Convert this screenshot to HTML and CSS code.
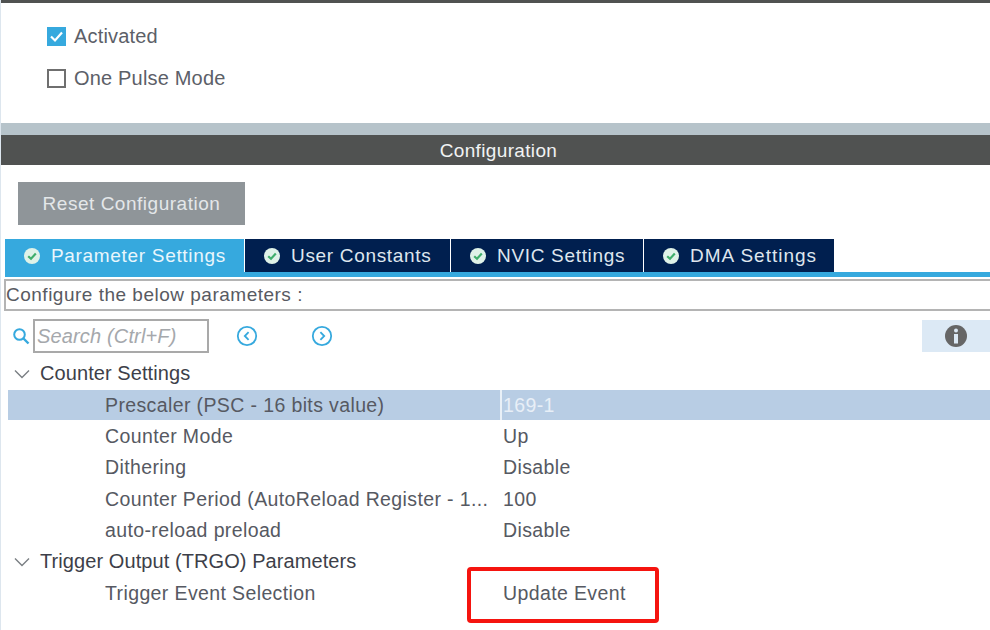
FILE: index.html
```html
<!DOCTYPE html>
<html lang="en">
<head>
<meta charset="utf-8">
<title>Timer configuration</title>
<link rel="stylesheet" href="styles.css">
</head>
<body>
<div class="page">
  <div class="top-bar"></div>
  <section class="mode">
    <label class="check-row">
      <span class="box checked"><svg viewBox="0 0 19 19" width="19" height="19"><path d="M4 9.5 8 13.5 15 5.5" fill="none" stroke="#fff" stroke-width="2.2"/></svg></span>
      <span>Activated</span>
    </label>
    <label class="check-row">
      <span class="box"></span>
      <span>One Pulse Mode</span>
    </label>
  </section>
  <div class="strip"></div>
  <header class="config-head">Configuration</header>
  <div class="reset-wrap"><button class="reset">Reset Configuration</button></div>
  <nav class="tabs">
    <div class="tab active"><svg class="ok" viewBox="0 0 18 18" width="18" height="18"><circle cx="9" cy="9" r="8" fill="#dff2e8"/><path d="M5.2 9.2 8 11.8 12.8 6.6" fill="none" stroke="#3fae6b" stroke-width="2.2"/></svg>Parameter Settings</div>
    <div class="tab w-user"><svg class="ok" viewBox="0 0 18 18" width="18" height="18"><circle cx="9" cy="9" r="8" fill="#dff2e8"/><path d="M5.2 9.2 8 11.8 12.8 6.6" fill="none" stroke="#3fae6b" stroke-width="2.2"/></svg>User Constants</div>
    <div class="tab w-nvic"><svg class="ok" viewBox="0 0 18 18" width="18" height="18"><circle cx="9" cy="9" r="8" fill="#dff2e8"/><path d="M5.2 9.2 8 11.8 12.8 6.6" fill="none" stroke="#3fae6b" stroke-width="2.2"/></svg>NVIC Settings</div>
    <div class="tab w-dma"><svg class="ok" viewBox="0 0 18 18" width="18" height="18"><circle cx="9" cy="9" r="8" fill="#dff2e8"/><path d="M5.2 9.2 8 11.8 12.8 6.6" fill="none" stroke="#3fae6b" stroke-width="2.2"/></svg>DMA Settings</div>
  </nav>
  <div class="describe">Configure the below parameters :</div>
  <div class="search-row">
    <svg class="mag" viewBox="0 0 18 18" width="18" height="18"><circle cx="7.5" cy="7.5" r="5.3" fill="none" stroke="#36a9de" stroke-width="2"/><path d="M11.5 11.5 16.5 16.5" stroke="#36a9de" stroke-width="2.4"/></svg>
    <div class="search">Search (Ctrl+F)</div>
    <svg class="nav-prev" viewBox="0 0 22 22" width="22" height="22"><circle cx="11" cy="11" r="9.2" fill="none" stroke="#36a9de" stroke-width="1.8"/><path d="M12.6 7.2 8.8 11 12.6 14.8" fill="none" stroke="#36a9de" stroke-width="1.8"/></svg>
    <svg class="nav-next" viewBox="0 0 22 22" width="22" height="22"><circle cx="11" cy="11" r="9.2" fill="none" stroke="#36a9de" stroke-width="1.8"/><path d="M9.4 7.2 13.2 11 9.4 14.8" fill="none" stroke="#36a9de" stroke-width="1.8"/></svg>
    <div class="info"><svg viewBox="0 0 24 24" width="24" height="24"><circle cx="12" cy="12" r="11" fill="#666"/><circle cx="12" cy="6.5" r="2" fill="#dce9f5"/><rect x="10" y="10" width="4" height="9.5" fill="#dce9f5"/></svg></div>
  </div>
  <div class="tree">
    <div class="group"><svg class="chev" viewBox="0 0 16 10" width="16" height="10"><path d="M1 1.5 8 8.5 15 1.5" fill="none" stroke="#7a7f83" stroke-width="1.4"/></svg>Counter Settings</div>
    <div class="row selected"><span class="name">Prescaler (PSC - 16 bits value)</span><span class="value">169-1</span></div>
    <div class="row"><span class="name">Counter Mode</span><span class="value">Up</span></div>
    <div class="row"><span class="name">Dithering</span><span class="value">Disable</span></div>
    <div class="row"><span class="name">Counter Period (AutoReload Register - 1...</span><span class="value">100</span></div>
    <div class="row"><span class="name">auto-reload preload</span><span class="value">Disable</span></div>
    <div class="group"><svg class="chev" viewBox="0 0 16 10" width="16" height="10"><path d="M1 1.5 8 8.5 15 1.5" fill="none" stroke="#7a7f83" stroke-width="1.4"/></svg>Trigger Output (TRGO) Parameters</div>
    <div class="row"><span class="name">Trigger Event Selection</span><span class="value">Update Event</span></div>
  </div>
  <div class="callout"></div>
</div>
</body>
</html>
```
FILE: styles.css
```css
* { box-sizing: border-box; }
html, body { margin: 0; padding: 0; background: #fff; }
body { font-family: "Liberation Sans", Arial, sans-serif; color: #53565c; overflow: hidden; }
.page { position: relative; width: 990px; height: 630px; overflow: hidden; border-left: 1px solid #dde6ee; display: flex; flex-direction: column; }
.top-bar { height: 3px; background: #505251; flex: none; margin-left: -1px; }
.mode { height: 120px; flex: none; padding: 23px 0 0 46px; display: flex; flex-direction: column; gap: 22px; }
.check-row { display: flex; align-items: center; gap: 8px; height: 20px; font-size: 20px; letter-spacing: 0.18px; color: #5c6068; }
.box { width: 19px; height: 19px; border: 2px solid #6f6f6f; background: #fff; display: block; flex: none; }
.box.checked { background: #36a9de; border: 0; }
.box svg { display: block; }
.strip { height: 12px; background: #b6c3ca; flex: none; }
.config-head { height: 30px; flex: none; margin-left: -1px; background: #505251; color: #f1f3f3; font-size: 19px; letter-spacing: 0.35px; line-height: 31px; text-align: center; padding-left: 7px; }
.reset-wrap { height: 74px; flex: none; padding: 17px 0 0 17px; }
.reset { width: 227px; height: 43px; border: 0; padding: 1px 0 0; background: #8f9599; color: #e4e7e9; font-family: inherit; font-size: 19px; letter-spacing: 0.52px; display: block; }
.tabs { height: 38px; flex: none; margin-left: 4px; display: flex; gap: 1px; border-bottom: 5px solid #36a9de; }
.tab { height: 33px; background: #001f4f; color: #dfe6ee; font-size: 19px; letter-spacing: 0.68px; display: flex; align-items: center; padding-left: 18px; gap: 10px; white-space: nowrap; }
.tab.active { width: 239px; background: #36a9de; color: #e9f6fc; }
.w-user { width: 205px; }
.w-nvic { width: 192px; }
.w-dma { width: 190px; letter-spacing: 1px; }
.ok { flex: none; }
.describe { height: 32px; flex: none; margin: 2px 0 0 3px; border: 2px solid #b4b4b4; border-right: 0; font-size: 19px; line-height: 28px; letter-spacing: 0.5px; padding-left: 0; color: #585a62; white-space: nowrap; }
.search-row { height: 34px; flex: none; margin-top: 8px; position: relative; display: flex; align-items: center; padding-left: 11px; }
.mag { flex: none; }
.search { width: 176px; height: 34px; margin-left: 3px; border: 2px solid #a9a9a9; font-size: 20px; letter-spacing: 0.15px; font-style: italic; color: #a5a8ac; line-height: 30px; padding-left: 2px; white-space: nowrap; overflow: hidden; }
.nav-prev { margin-left: 27px; flex: none; }
.nav-next { margin-left: 53px; flex: none; }
.info { margin-left: auto; width: 68px; height: 32px; background: #dce9f5; display: flex; align-items: center; padding-left: 22px; flex: none; }
.tree { margin-top: 5px; margin-left: 7px; padding-top: 0.4px; display: flex; flex-direction: column; flex: none; }
.group { height: 31.3px; line-height: 31.3px; display: flex; align-items: center; font-size: 20px; color: #3d3f49; white-space: nowrap; padding-left: 6px; gap: 10px; letter-spacing: 0.08px; }
.chev { flex: none; }
.row { height: 31.3px; display: flex; align-items: center; font-size: 19.5px; letter-spacing: 0.38px; color: #565962; white-space: nowrap; }
.row.selected { background: #b8cde4; height: 30px; margin-top: 0.6px; margin-bottom: 0.7px; }
.name { width: 492px; padding-left: 97px; flex: none; }
.value { padding-left: 3px; flex: 1; align-self: stretch; display: flex; align-items: center; }
.selected .value { border-left: 2px solid #e9f0f7; color: #e8eff7; padding-left: 1px; }
.callout { position: absolute; left: 466px; top: 567px; width: 192px; height: 56px; border: 4px solid #f5140f; border-radius: 4px; }
```
